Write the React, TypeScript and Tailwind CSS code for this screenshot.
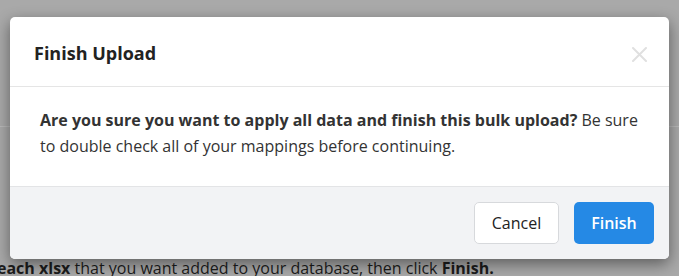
export default function App() {
  return (
    <div className="relative w-[679px] h-[276px] overflow-hidden bg-[#a9a9a9]" style={{ fontFamily: '"Open Sans", "Noto Sans", sans-serif' }}>
      <div className="flex flex-col h-full">
        <div className="h-[127px] border-b border-[#b9b9b9]"></div>
        <div className="flex-1"></div>
        <div className="ml-[-3px] mb-[-4px] h-[24px] text-[16px] text-[#1c1c1c] whitespace-nowrap leading-[24px]">
          <b>each xlsx</b> that you want added to your database, then click <b>Finish.</b>
        </div>
      </div>
      <div className="absolute left-[10px] top-[17px] w-[659px] bg-white rounded-[5px] shadow-[0_5px_15px_rgba(0,0,0,0.45)] overflow-hidden">
        <div className="h-[70px] flex items-center justify-between pl-[24px] pr-[22px] border-b border-[#e5e5e5]">
          <h2 className="text-[18px] font-bold text-[#222] mt-[3px]">Finish Upload</h2>
          <svg width="15" height="15" viewBox="0 0 15 15" className="mt-[6px]">
            <path d="M1 1 L14 14 M14 1 L1 14" stroke="#e0e0e0" strokeWidth="2" strokeLinecap="round" />
          </svg>
        </div>
        <div className="pl-[30px] pr-[30px] pt-[20px] pb-[27px] text-[16px] leading-[26px] text-[#333]">
          <b className="font-bold">Are you sure you want to apply all data and finish this bulk upload?</b> Be sure to double check all of your mappings before continuing.
        </div>
        <div className="h-[73px] bg-[#f2f3f5] border-t border-[#e3e4e6] flex items-center justify-end gap-[15px] pr-[15px]">
          <button className="h-[42px] w-[85px] rounded-[5px] border border-[#d7d9dc] bg-white text-[16px] text-[#222]">Cancel</button>
          <button className="h-[42px] w-[80px] rounded-[5px] bg-[#2589e5] text-[16px] font-semibold text-white">Finish</button>
        </div>
      </div>
    </div>
  );
}
